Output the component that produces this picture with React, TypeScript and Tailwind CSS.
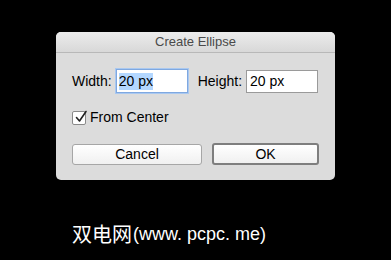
import React from 'react';

const App: React.FC = () => {
  return (
    <div className="w-[391px] h-[260px] bg-black relative overflow-hidden" style={{ fontFamily: '"Liberation Sans", Arial, sans-serif' }}>
      <div className="pt-[32px] pl-[56px]">
        <div className="w-[279px] h-[148px] bg-[#dcdcdc] rounded-[5px] overflow-hidden flex flex-col">
          <div className="h-[21px] bg-gradient-to-b from-[#ececec] to-[#d8d8d8] border-b border-[#b8b8b8] flex items-center justify-center text-[13px] text-[#4a4a4a]">
            Create Ellipse
          </div>
          <div className="flex items-center pl-[16px] mt-[16px] text-[14px] text-black">
            <span>Width:</span>
            <div className="ml-[4px] w-[72px] h-[24px] bg-white border border-[#7fa8e0] shadow-[0_0_0_1px_#a9c8f0] flex items-center pl-[2px]">
              <span className="bg-[#b3d7ff] leading-[17px]">20 px</span>
            </div>
            <span className="ml-[10px]">Height:</span>
            <div className="ml-[4px] w-[72px] h-[23px] bg-white border border-[#9a9a9a] flex items-center pl-[3px]">
              <span>20 px</span>
            </div>
          </div>
          <div className="flex items-center pl-[16px] mt-[14px] text-[14px] text-black">
            <div className="w-[14px] h-[14px] bg-white border border-[#8a8a8a] rounded-[2px] relative">
              <svg viewBox="0 0 14 14" className="absolute left-[1px] -top-[2px] w-[14px] h-[14px]">
                <path d="M2.5 7.5 L5.5 11 L12 1.5" fill="none" stroke="#222" strokeWidth="1.6" strokeLinecap="round" strokeLinejoin="round" />
              </svg>
            </div>
            <span className="ml-[4px]">From Center</span>
          </div>
          <div className="flex items-center pl-[16px] mt-[15px] gap-[10px] text-[14px] text-black">
            <button className="w-[130px] h-[21px] bg-gradient-to-b from-white to-[#f0f0f0] border border-[#a6a6a6] rounded-[3px] leading-none">
              Cancel
            </button>
            <button className="w-[107px] h-[22px] bg-gradient-to-b from-white to-[#f0f0f0] border-2 border-[#7e7e7e] rounded-[3px] leading-none">
              OK
            </button>
          </div>
        </div>
      </div>
      <div className="absolute left-[72px] top-[222px] flex items-center text-white leading-[24px]">
        <span className="text-[20px]" style={{ fontFamily: '"Noto Sans CJK SC", sans-serif' }}>双电网</span>
        <span className="text-[18px] ml-[1px]">(www. pcpc. me)</span>
      </div>
    </div>
  );
};

export default App;
